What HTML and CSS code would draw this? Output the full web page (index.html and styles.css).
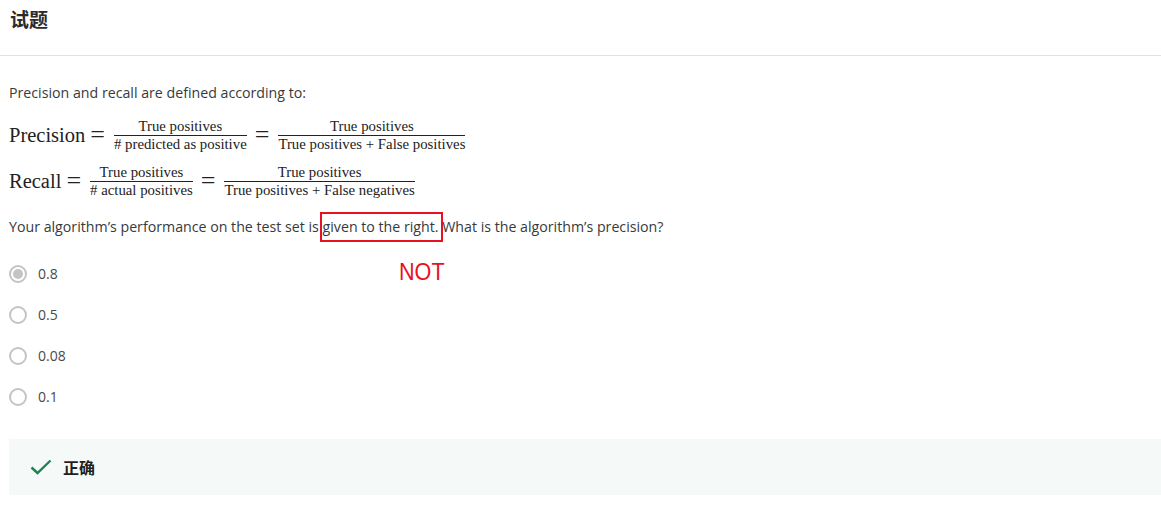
FILE: index.html
```html
<!DOCTYPE html>
<html lang="zh">
<head>
<meta charset="utf-8">
<title>试题</title>
<link rel="stylesheet" href="styles.css">
</head>
<body>
<div class="header"><h2 class="title">试题</h2></div>
<div class="content">
  <p class="intro">Precision and recall are defined according to:</p>
  <div class="math-line m1">
    <span class="mword">Precision</span>
    <span class="eq">=</span>
    <span class="frac"><span class="num">True positives</span><span class="den"># predicted as positive</span></span>
    <span class="eq">=</span>
    <span class="frac"><span class="num">True positives</span><span class="den">True positives + False positives</span></span>
  </div>
  <div class="math-line m2">
    <span class="mword">Recall</span>
    <span class="eq">=</span>
    <span class="frac"><span class="num">True positives</span><span class="den"># actual positives</span></span>
    <span class="eq">=</span>
    <span class="frac"><span class="num">True positives</span><span class="den">True positives + False negatives</span></span>
  </div>
  <p class="question">Your algorithm’s performance on the test set is <span class="boxed">given to the right.</span> What is the algorithm’s precision?</p>
  <div class="options">
    <span class="note">NOT</span>
    <div class="option"><span class="radio checked"></span><span class="label">0.8</span></div>
    <div class="option"><span class="radio"></span><span class="label">0.5</span></div>
    <div class="option"><span class="radio"></span><span class="label">0.08</span></div>
    <div class="option"><span class="radio"></span><span class="label">0.1</span></div>
  </div>
  <div class="feedback">
    <svg class="check" width="22" height="16" viewBox="0 0 22 16"><path d="M1.5 8.5 L7.5 14 L20.5 1.5" fill="none" stroke="#1f8354" stroke-width="2.4"/></svg>
    <span class="fb-text">正确</span>
  </div>
</div>
</body>
</html>
```
FILE: styles.css
```css
body {
  margin: 0;
  font-family: "Open Sans", "Noto Sans CJK SC", sans-serif;
  color: #373a3c;
  background: #fff;
}
.header {
  height: 56px;
  border-bottom: 1px solid #e1e1e1;
  padding-left: 10px;
  box-sizing: border-box;
}
.title {
  margin: 0;
  padding-top: 6px;
  font-family: "Noto Sans CJK SC", sans-serif;
  font-size: 19px;
  line-height: 26px;
  font-weight: 700;
  color: #2a2a2a;
}
.content {
  padding-left: 9px;
}
.intro {
  margin: 27px 0 0;
  font-size: 14.2px;
  line-height: 20px;
}
.math-line {
  display: flex;
  align-items: center;
  font-family: "Liberation Serif", serif;
  color: #222;
  height: 46px;
}
.m1 { margin-top: 9px; }
.mword {
  font-size: 20.5px;
}
.eq {
  font-size: 26px;
  line-height: 20px;
  margin: 0 6px 0 5px;
}
.frac {
  display: inline-flex;
  flex-direction: column;
  align-items: center;
  font-size: 14.8px;
  line-height: 15px;
  margin: 0 3px;
}
.num {
  padding-bottom: 1px;
}
.den {
  border-top: 1.5px solid #222;
  padding-top: 1px;
  width: 100%;
  text-align: center;
}
.question {
  margin: 13px 0 0;
  font-size: 14.2px;
  line-height: 20px;
}
.boxed {
  position: relative;
}
.boxed::after {
  content: "";
  position: absolute;
  left: -3px;
  right: -4px;
  top: -5px;
  bottom: -6px;
  border: 2px solid #e81123;
}
.options {
  position: relative;
  margin-top: 16px;
}
.note {
  position: absolute;
  left: 390px;
  top: 5px;
  font-family: "Liberation Sans", sans-serif;
  font-size: 24px;
  color: #e81123;
  transform: scaleX(0.9);
  transform-origin: left center;
}
.option {
  display: flex;
  align-items: center;
  height: 41px;
}
.radio {
  width: 18px;
  height: 18px;
  box-sizing: border-box;
  border: 2px solid #c4c4c4;
  border-radius: 50%;
  display: flex;
  align-items: center;
  justify-content: center;
}
.radio.checked::before {
  content: "";
  width: 10px;
  height: 10px;
  border-radius: 50%;
  background: #c4c4c4;
}
.label {
  margin-left: 11px;
  font-size: 14px;
  color: #4a4a4a;
}
.feedback {
  margin-top: 22px;
  height: 56px;
  background: #f5f9f8;
  display: flex;
  align-items: center;
  padding-left: 21px;
}
.check {
  margin-right: 11px;
}
.fb-text {
  font-family: "Noto Sans CJK SC", sans-serif;
  font-weight: 700;
  font-size: 16px;
  color: #1f1f1f;
}
```
